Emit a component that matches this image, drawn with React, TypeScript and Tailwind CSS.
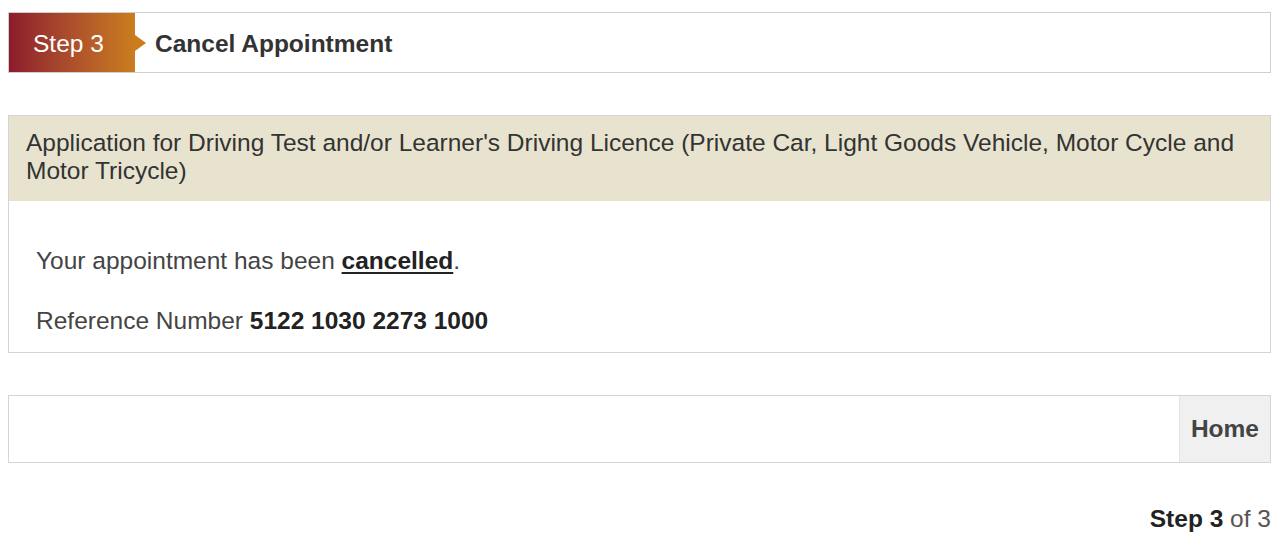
import React from "react";

export default function App() {
  return (
    <div className="w-[1286px] h-[542px] bg-white font-['Liberation_Sans',Arial,sans-serif] text-[24.5px] text-[#444]">
      <div className="ml-[8px] w-[1263px] pt-[12px]">
        {/* Step header */}
        <div className="flex h-[61px] items-stretch border border-[#cfcfcf] bg-white">
          <div className="relative flex w-[126px] items-center bg-gradient-to-r from-[#8d1b2c] to-[#cb7d1d] pl-[24px] pt-[3px] text-white">
            <span className="text-[24.5px]">Step 3</span>
            <span className="absolute right-[-11px] top-1/2 h-0 w-0 -translate-y-1/2 border-y-[8px] border-l-[11px] border-y-transparent border-l-[#cb7d1d]" />
          </div>
          <div className="flex items-center pl-[20px] pt-[3px] text-[24.5px] font-bold text-[#333]">
            Cancel Appointment
          </div>
        </div>

        {/* Result panel */}
        <div className="mt-[42px] border border-[#d4d4d4]">
          <div className="bg-[#e8e3cf] pl-[17px] pr-[10px] pt-[13px] pb-[16px] leading-[28px] text-[#333]">
            Application for Driving Test and/or Learner's Driving Licence (Private Car, Light Goods Vehicle, Motor Cycle and Motor Tricycle)
          </div>
          <div className="flex flex-col gap-[32px] px-[27px] pt-[46px] pb-[17px] leading-[28px]">
            <p>
              Your appointment has been{" "}
              <span className="font-bold text-[#222] underline underline-offset-[3px]">cancelled</span>.
            </p>
            <p>
              Reference Number <span className="font-bold text-[#222]">5122 1030 2273 1000</span>
            </p>
          </div>
        </div>

        {/* Footer nav */}
        <div className="mt-[42px] flex h-[68px] justify-end border border-[#d4d4d4] bg-white">
          <button className="flex items-center border-l border-[#e4e4e4] bg-[#f0f0f0] px-[11px] font-bold text-[#444]">
            Home
          </button>
        </div>

        <div className="mt-[42px] text-right leading-[28px] text-[#555]">
          <span className="font-bold text-[#222]">Step 3</span> of 3
        </div>
      </div>
    </div>
  );
}
